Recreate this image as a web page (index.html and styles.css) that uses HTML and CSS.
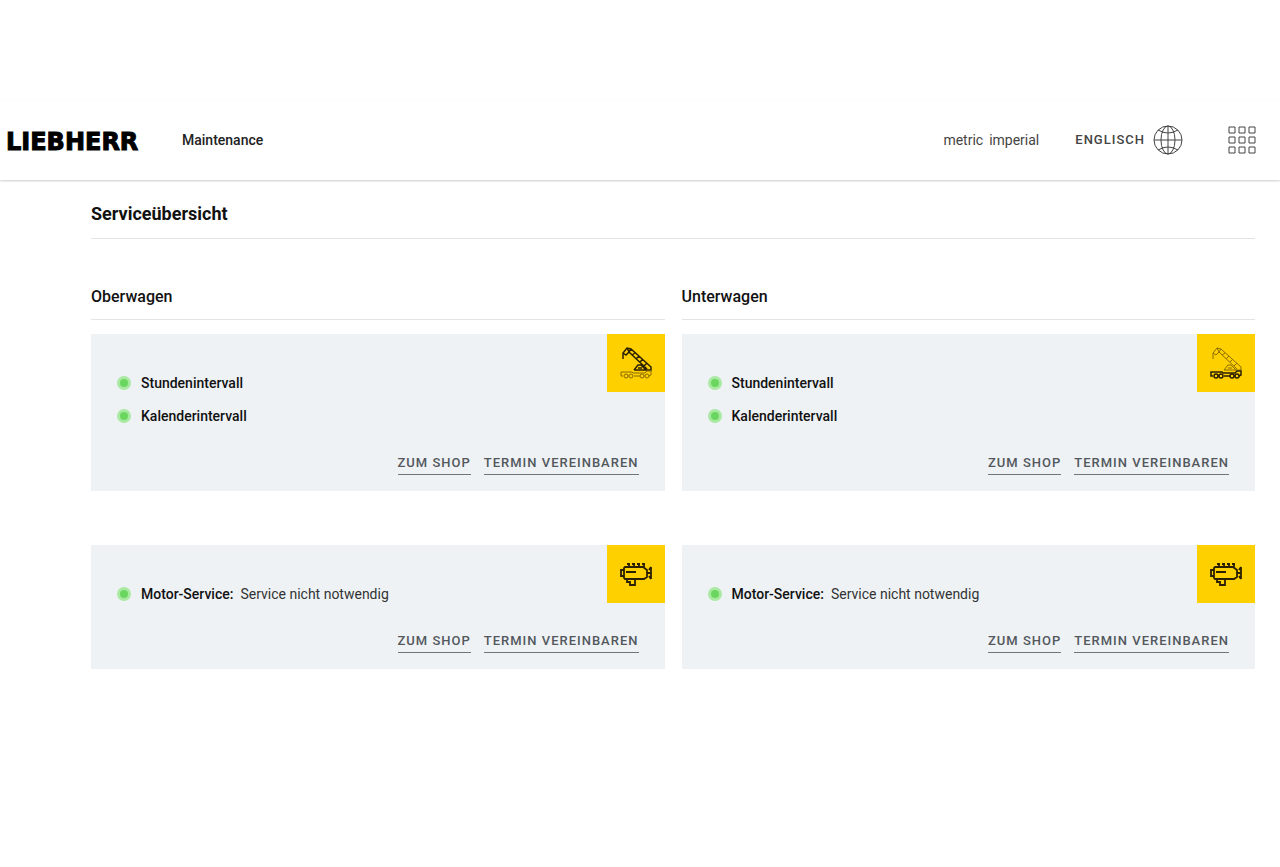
FILE: index.html
```html
<!DOCTYPE html>
<html lang="de">
<head>
<meta charset="utf-8">
<meta name="viewport" content="width=device-width, initial-scale=1">
<title>Maintenance</title>
<link rel="stylesheet" href="styles.css">
</head>
<body>
<svg class="defs" aria-hidden="true">
  <symbol id="boom" viewBox="0 0 34 36">
    <path d="M4 15V9l4-5 4 1 20 18v3H15M4 9l3 2 3-3M10 8l18 17M8 4l2 4 2-3M13 11l3-2M17 15l3-3M21 18l3-3M25 22l3-3M15 26l4-5h3l5 5M19 24h4"/>
  </symbol>
  <symbol id="chassis" viewBox="0 0 34 36">
    <path d="M4 32H2v-4h11l1 1h12l2-2h4v4l-2 1M9 32h1M15 32h6M25 32h1"/>
    <circle cx="7" cy="32" r="2"/><circle cx="12" cy="32" r="2"/><circle cx="23" cy="32" r="2"/><circle cx="28" cy="32" r="2"/>
  </symbol>
  <symbol id="engine" viewBox="0 0 34 34">
    <path d="M6 9h18l4 3v7l-3 2H6l-1-1V10zM5 12H2v6h3M10 9V5M15 9V5M20 9V5M25 9V5M8 6h3M13 6h3M18 6h3M23 6h3M7 14h10M28 15h4M32 9v12M30 12l2-3M30 18l2 3M8 21v3h3v3h5v-6"/>
  </symbol>
</svg>
<header class="header">
  <a class="logo" href="#">LIEBHERR</a>
  <a class="app-name" href="#">Maintenance</a>
  <div class="units">
    <button type="button">metric</button>
    <button type="button">imperial</button>
  </div>
  <button class="language" type="button">ENGLISCH
    <svg class="globe" viewBox="0 0 30 30" aria-hidden="true"><circle cx="15" cy="15" r="14"/><ellipse cx="15" cy="15" rx="7" ry="14"/><path d="M15 1v28M1 15h28M5 5q10 6 20 0M5 25q10-6 20 0"/></svg>
  </button>
  <button class="apps" type="button" aria-label="Apps">
    <svg viewBox="0 0 28 28" aria-hidden="true"><path d="M1 1h6v6H1zM11 1h6v6h-6zM21 1h6v6h-6zM1 11h6v6H1zM11 11h6v6h-6zM21 11h6v6h-6zM1 21h6v6H1zM11 21h6v6h-6zM21 21h6v6h-6z"/></svg>
  </button>
</header>
<main class="main">
  <h1>Serviceübersicht</h1>
  <div class="columns">
    <section>
      <h2>Oberwagen</h2>
      <article class="card">
        <svg class="tile" viewBox="-12 -10 58 58" aria-hidden="true"><use href="#boom" width="34" height="36"/><use class="muted" href="#chassis" width="34" height="36"/></svg>
        <ul><li><strong>Stundenintervall</strong></li><li><strong>Kalenderintervall</strong></li></ul>
        <div class="actions"><a href="#">ZUM SHOP</a><a href="#">TERMIN VEREINBAREN</a></div>
      </article>
      <article class="card">
        <svg class="tile" viewBox="-12 -13 58 58" aria-hidden="true"><use class="bold" href="#engine" width="34" height="34"/></svg>
        <ul><li><strong>Motor-Service:</strong> <span>Service nicht notwendig</span></li></ul>
        <div class="actions"><a href="#">ZUM SHOP</a><a href="#">TERMIN VEREINBAREN</a></div>
      </article>
    </section>
    <section>
      <h2>Unterwagen</h2>
      <article class="card">
        <svg class="tile" viewBox="-12 -10 58 58" aria-hidden="true"><use class="muted" href="#boom" width="34" height="36"/><use href="#chassis" width="34" height="36"/></svg>
        <ul><li><strong>Stundenintervall</strong></li><li><strong>Kalenderintervall</strong></li></ul>
        <div class="actions"><a href="#">ZUM SHOP</a><a href="#">TERMIN VEREINBAREN</a></div>
      </article>
      <article class="card">
        <svg class="tile" viewBox="-12 -13 58 58" aria-hidden="true"><use class="bold" href="#engine" width="34" height="34"/></svg>
        <ul><li><strong>Motor-Service:</strong> <span>Service nicht notwendig</span></li></ul>
        <div class="actions"><a href="#">ZUM SHOP</a><a href="#">TERMIN VEREINBAREN</a></div>
      </article>
    </section>
  </div>
</main>
</body>
</html>
```
FILE: styles.css
```css
*, *::before { box-sizing: border-box; }
body {
  margin: 0;
  padding-top: 100px;
  background: #fff;
  color: #111;
  font: 14px/20px Roboto, "Liberation Sans", sans-serif;
}
a { color: inherit; text-decoration: none; }
button { padding: 0; border: 0; background: none; color: #444; font: inherit; cursor: pointer; }
svg { fill: none; stroke: currentColor; }
.defs { position: absolute; width: 0; height: 0; }

.header {
  display: flex;
  align-items: center;
  height: 80px;
  padding: 0 24px 0 6px;
  box-shadow: 0 1px 2px #ccc;
}
.logo {
  width: 136px;
  margin-right: 40px;
  padding-top: 3px;
  color: #000;
  font: 700 24px/28px "DejaVu Sans", sans-serif;
  -webkit-text-stroke: 1px #000;
}
.app-name { color: #222; font-weight: 500; }
.units { display: flex; gap: 6px; margin-left: auto; }
.language { display: flex; align-items: center; gap: 8px; margin: 0 45px 0 36px; font-size: 13px; font-weight: 500; letter-spacing: 1px; }
.globe { width: 30px; height: 30px; }
.apps svg { display: block; width: 28px; height: 28px; }

.main { padding: 20px 25px 0 91px; }
h1 { margin: 0; padding-bottom: 10px; border-bottom: 1px solid #e4e4e4; font-size: 18px; line-height: 28px; }
h2 { margin: 0 0 14px; padding-bottom: 12px; border-bottom: 1px solid #e4e4e4; font-size: 16px; line-height: 20px; font-weight: 500; }
.columns { display: grid; grid-template-columns: 1fr 1fr; gap: 17px; padding-top: 48px; }

.card { position: relative; padding: 32px 26px 16px; background: #eef2f5; }
.card + .card { margin-top: 54px; }
.tile { position: absolute; top: 0; right: 0; width: 58px; height: 58px; background: #ffd000; color: #2b2000; stroke-width: 1.5; }
.muted { stroke: #8a6c00; stroke-width: 1; }
.bold { stroke-width: 1.8; }
ul { margin: 0; padding: 0; list-style: none; }
li { display: flex; align-items: center; gap: 7px; height: 33px; }
li::before {
  content: "";
  width: 14px;
  height: 14px;
  margin-right: 3px;
  border: 3px solid #a9e9a1;
  border-radius: 50%;
  background: #6bd65f;
}
strong { font-weight: 500; }
li span { color: #333; }
.actions { display: flex; justify-content: flex-end; gap: 13px; padding-top: 21px; }
.actions a { padding-bottom: 1px; border-bottom: 1px solid #70757a; color: #53585d; font-size: 13px; font-weight: 500; line-height: 20px; letter-spacing: 1px; }
```
